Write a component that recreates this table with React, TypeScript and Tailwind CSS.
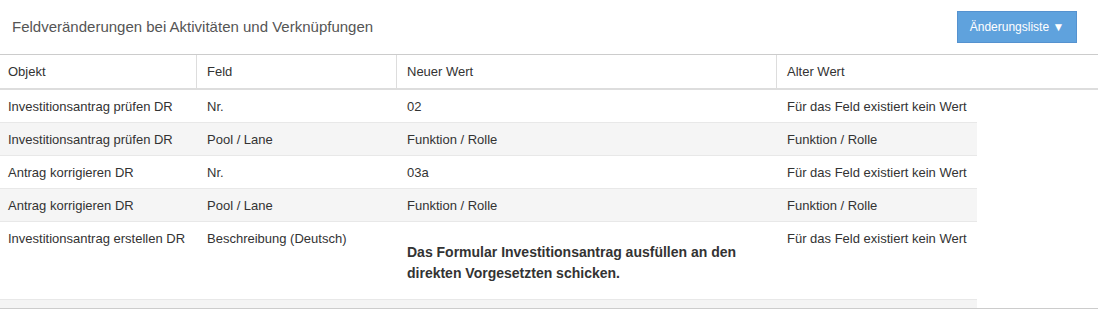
type Row = { objekt: string; feld: string; neu: string; alt: string; rich?: boolean };

const rows: Row[] = [
  { objekt: "Investitionsantrag prüfen DR", feld: "Nr.", neu: "02", alt: "Für das Feld existiert kein Wert" },
  { objekt: "Investitionsantrag prüfen DR", feld: "Pool / Lane", neu: "Funktion / Rolle", alt: "Funktion / Rolle" },
  { objekt: "Antrag korrigieren DR", feld: "Nr.", neu: "03a", alt: "Für das Feld existiert kein Wert" },
  { objekt: "Antrag korrigieren DR", feld: "Pool / Lane", neu: "Funktion / Rolle", alt: "Funktion / Rolle" },
  {
    objekt: "Investitionsantrag erstellen DR",
    feld: "Beschreibung (Deutsch)",
    neu: "Das Formular Investitionsantrag ausfüllen an den direkten Vorgesetzten schicken.",
    alt: "Für das Feld existiert kein Wert",
    rich: true
  }
];

const headers = ["Objekt", "Feld", "Neuer Wert", "Alter Wert"];

export default function App() {
  return (
    <div className="h-[309px] w-[1098px] overflow-hidden bg-white font-['Liberation_Sans',Arial,sans-serif] text-[13px] text-[#333]">
      <div className="flex h-[55px] items-center justify-between border-b border-[#ccc] pl-[12px] pr-[21px]">
        <h2 className="text-[15px] text-[#555]">Feldveränderungen bei Aktivitäten und Verknüpfungen</h2>
        <button className="h-[32px] w-[120px] border border-[#5592cf] bg-[#5fa2dd] text-[12px] text-white">
          Änderungsliste ▼
        </button>
      </div>

      <div className="grid h-[35px] grid-cols-[196px_200px_380px_1fr] border-b-2 border-[#ddd] text-[#333]">
        {headers.map((label, i) => (
          <div className={`flex items-center px-[10px] first:px-[8px] ${i > 0 ? "border-l border-[#ddd]" : ""}`} key={label}>
            {label}
          </div>
        ))}
      </div>

      <div className="w-[977px] border-b-[8px] border-[#f4f4f4]">
        {rows.map((row, i) => (
          <div
            className={`grid grid-cols-[196px_200px_380px_201px] whitespace-nowrap border-b border-[#e8e8e8] ${i % 2 === 1 ? "bg-[#f5f5f5]" : "bg-white"}`}
            key={i}
          >
            <div className="px-[8px] pb-[7px] pt-[9px] leading-[16px]">{row.objekt}</div>
            <div className="px-[11px] pb-[7px] pt-[9px] leading-[16px]">{row.feld}</div>
            {row.rich ? (
              <div className="pl-[11px] pb-[15px] pt-[20px]">
                <p className="w-[355px] whitespace-normal text-[14px] font-bold leading-[21px] text-[#333]">{row.neu}</p>
              </div>
            ) : (
              <div className="px-[11px] pb-[7px] pt-[9px] leading-[16px]">{row.neu}</div>
            )}
            <div className="px-[11px] pb-[7px] pt-[9px] leading-[16px]">{row.alt}</div>
          </div>
        ))}
      </div>
      <div className="h-px w-full bg-[#ccc]" />
    </div>
  );
}
